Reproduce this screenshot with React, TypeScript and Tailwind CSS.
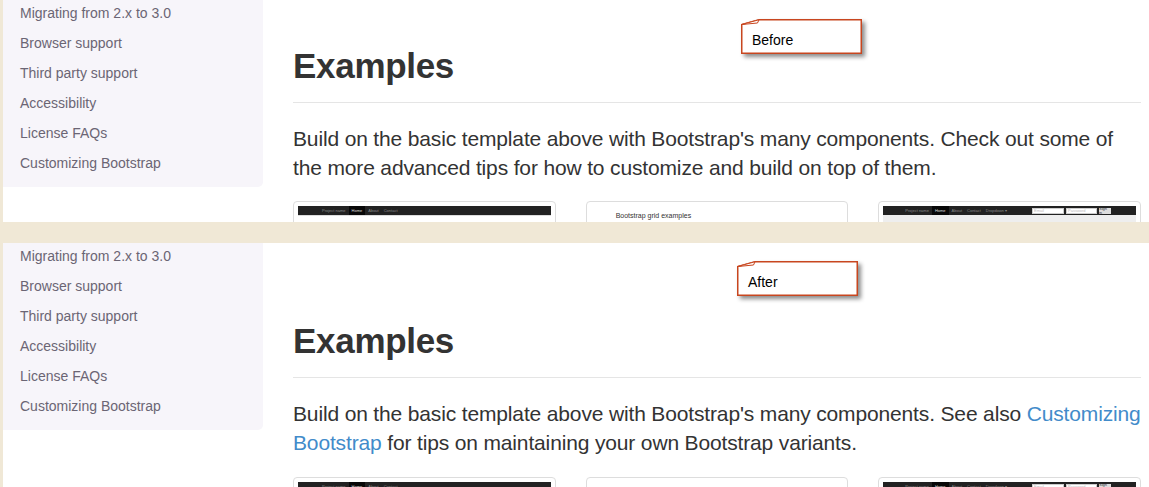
import React from 'react';

const navItems = [
  'Migrating from 2.x to 3.0',
  'Browser support',
  'Third party support',
  'Accessibility',
  'License FAQs',
  'Customizing Bootstrap',
];

function Sidebar() {
  return (
    <div className="w-[260px] self-start bg-[#f7f5fa] rounded-br-[5px] pb-[7px]">
      {navItems.map((item) => (
        <div key={item} className="h-[30px] pl-[17px] text-[14px] leading-[26px] text-[#6b6574]">
          {item}
        </div>
      ))}
    </div>
  );
}

function Note({ label, className }: { label: string; className: string }) {
  return (
    <div className={`absolute w-[121px] h-[35px] ${className}`}>
      <svg
        className="absolute inset-0 drop-shadow-[3px_3px_2px_rgba(0,0,0,0.45)]"
        width="121"
        height="35"
        viewBox="0 0 121 35"
      >
        <path d="M18 0.75 L120.25 0.75 L120.25 34.25 L0.75 34.25 L0.75 5.5 Z" fill="#fff" stroke="#c8461f" strokeWidth="1.5" />
        <path d="M0.75 5.5 L18 0.75 L16.5 4 Z" fill="#fff" stroke="#c8461f" strokeWidth="1" strokeLinejoin="round" />
      </svg>
      <span className="absolute left-[11px] top-[13px] text-[14px] leading-[16px] text-black">{label}</span>
    </div>
  );
}

function MiniNav({ wide }: { wide?: boolean }) {
  return (
    <div className="h-[9px] bg-[#222] flex items-center text-[4px] leading-none text-[#888]">
      <span className={wide ? 'ml-[22px]' : 'ml-[24px]'}>Project name</span>
      <span className="ml-[3px] h-full px-[3px] bg-[#080808] text-[#ddd] flex items-center">Home</span>
      <span className="ml-[3px]">About</span>
      <span className="ml-[5px]">Contact</span>
      {wide && (
        <>
          <span className="ml-[5px]">Dropdown ▾</span>
          <span className="ml-auto h-[6px] w-[32px] bg-white border border-[#ccc] text-[#bbb] pl-[1px] flex items-center">Email</span>
          <span className="ml-[2px] h-[6px] w-[31px] bg-white border border-[#ccc] text-[#bbb] pl-[1px] flex items-center">Password</span>
          <span className="ml-[2px] mr-[25px] h-[6px] w-[12px] bg-[#ddd] text-[#333] flex items-center justify-center">Sign in</span>
        </>
      )}
    </div>
  );
}

function Thumbnails() {
  return (
    <div className="grid grid-cols-3 gap-[30px]">
      <div className="h-[60px] border border-[#ddd] rounded-[4px] p-[4px]">
        <MiniNav />
        <div className="h-px bg-[#ddd]" />
      </div>
      <div className="h-[60px] border border-[#ddd] rounded-[4px] p-[4px]">
        <div className="pl-[25px] pt-[6px] text-[7px] leading-none text-[#333]">Bootstrap grid examples</div>
      </div>
      <div className="h-[60px] border border-[#ddd] rounded-[4px] p-[4px]">
        <MiniNav wide />
        <div className="h-[30px] bg-[#eee]" />
      </div>
    </div>
  );
}

function Panel({ after }: { after?: boolean }) {
  return (
    <div className={`relative flex bg-white overflow-hidden ${after ? 'flex-1' : 'h-[222px] shrink-0'}`}>
      <Sidebar />
      <div className={`ml-[30px] w-[848px] shrink-0 ${after ? 'pt-[78px]' : 'pt-[46px]'}`}>
        <h1 className="pb-[17px] border-b border-[#e5e5e5] text-[35px] leading-[39px] font-bold text-[#333] tracking-[-0.3px]">
          Examples
        </h1>
        <p className="mt-[21px] text-[21px] leading-[29px] text-[#333] whitespace-nowrap tracking-[-0.15px]">
          {after ? (
            <>
              Build on the basic template above with Bootstrap's many components. See also{' '}
              <span className="text-[#428bca]">Customizing</span>
              <br />
              <span className="text-[#428bca]">Bootstrap</span> for tips on maintaining your own Bootstrap variants.
            </>
          ) : (
            <>
              Build on the basic template above with Bootstrap's many components. Check out some of
              <br />
              the more advanced tips for how to customize and build on top of them.
            </>
          )}
        </p>
        <div className={after ? 'mt-[20px]' : 'mt-[19px]'}>
          <Thumbnails />
        </div>
      </div>
      {after ? (
        <Note label="After" className="left-[734px] top-[18px]" />
      ) : (
        <Note label="Before" className="left-[738px] top-[19px]" />
      )}
    </div>
  );
}

export default function App() {
  return (
    <div
      className="w-[1149px] h-[487px] bg-[#f0e8d6] pl-[3px] flex flex-col gap-[21px] overflow-hidden"
      style={{ fontFamily: '"Liberation Sans", Arial, sans-serif' }}
    >
      <Panel />
      <Panel after />
    </div>
  );
}
